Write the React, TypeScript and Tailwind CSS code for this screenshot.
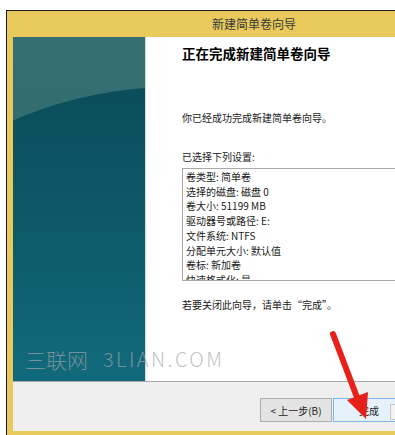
import React from 'react';

const settings = [
  '卷类型: 简单卷',
  '选择的磁盘: 磁盘 0',
  '卷大小: 51199 MB',
  '驱动器号或路径: E:',
  '文件系统: NTFS',
  '分配单元大小: 默认值',
  '卷标: 新加卷',
  '快速格式化: 是',
];

export default function App() {
  return (
    <main
      className="relative w-[395px] h-[435px] overflow-hidden bg-white pt-[10px] pl-[6px]"
      style={{ fontFamily: '"Noto Sans CJK SC", "Noto Sans", sans-serif' }}
    >
      {/* Window frame */}
      <div className="w-[389px] h-[425px] border-l border-t border-[#1a1a1a] bg-[#e9c95c] flex flex-col">
        {/* Title bar */}
        <div className="h-[26px] flex items-center pl-[205px] text-[12px] text-[#3a3a3a]">
          新建简单卷向导
        </div>

        <div className="flex-1 flex flex-col pl-[6px]">
          {/* Body */}
          <div className="h-[344px] flex bg-white">
            {/* Left teal panel */}
            <div className="relative w-[133px] h-full overflow-hidden bg-[linear-gradient(to_bottom,#356f73,#2a6669)] border-r border-[#d6dcdc]">
              <div className="absolute left-[-240px] top-[50px] w-[800px] h-[800px] rounded-full bg-[linear-gradient(to_bottom,#0b4d5a_0px,#0d5a69_150px,#116b7d_300px)]" />
            </div>

            {/* Right content */}
            <div className="flex-1 pl-[36px] pt-[7px] text-[#1a1a1a] overflow-hidden">
              <h1 className="text-[13.5px] leading-[18px] font-bold text-black whitespace-nowrap">
                正在完成新建简单卷向导
              </h1>
              <p className="mt-[48px] text-[10px] leading-[15px] whitespace-nowrap">
                你已经成功完成新建简单卷向导。
              </p>
              <p className="mt-[24px] text-[10px] leading-[15px] whitespace-nowrap">
                已选择下列设置:
              </p>
              <div className="mt-[4px] h-[113px] w-[240px] border border-[#a9a9a9] bg-white overflow-hidden pl-[3px] pt-[1px]">
                {settings.map((s) => (
                  <div key={s} className="text-[10px] leading-[14.7px] whitespace-nowrap">
                    {s}
                  </div>
                ))}
              </div>
              <p className="mt-[16px] text-[10px] leading-[15px] whitespace-nowrap">
                若要关闭此向导，请单击“完成”。
              </p>
            </div>
          </div>

          {/* Bottom button bar */}
          <div className="h-[50px] bg-[#efefef] border-t border-[#a8a8a8] flex items-start pt-[16px] pl-[247px] gap-[1px]">
            <button className="shrink-0 w-[72px] h-[24px] border border-[#adadad] bg-[#e3e3e3] text-[10px] text-[#222] flex items-center justify-center">
              &lt; 上一步(B)
            </button>
            <button className="shrink-0 w-[72px] h-[24px] border border-[#7eb4ea] bg-[#e5f1fb] text-[10px] text-[#222] flex items-center justify-center">
              完成
            </button>
          </div>
        </div>
      </div>

      {/* small artifact next to the finish button */}
      <div className="absolute left-[390px] top-[404px] w-[8px] h-[16px] border border-[#c8c8c8] bg-[#f4f4f4]" />

      {/* Watermark */}
      <div className="absolute left-[25px] top-[344px] flex items-center font-light text-[rgba(165,165,165,0.7)] whitespace-nowrap">
        <span className="text-[21px] leading-[30px]">三联网</span>
        <span className="ml-[15px] text-[20px] leading-[30px] tracking-[2.4px]">3LIAN.COM</span>
      </div>

      {/* Red arrow */}
      <svg className="absolute left-0 top-0" width="395" height="435" viewBox="0 0 395 435">
        <line x1="333" y1="334" x2="358" y2="400" stroke="#e8201a" strokeWidth="6" strokeLinecap="round" />
        <polygon points="366,419 347,400 368,392" fill="#e8201a" />
      </svg>
    </main>
  );
}
